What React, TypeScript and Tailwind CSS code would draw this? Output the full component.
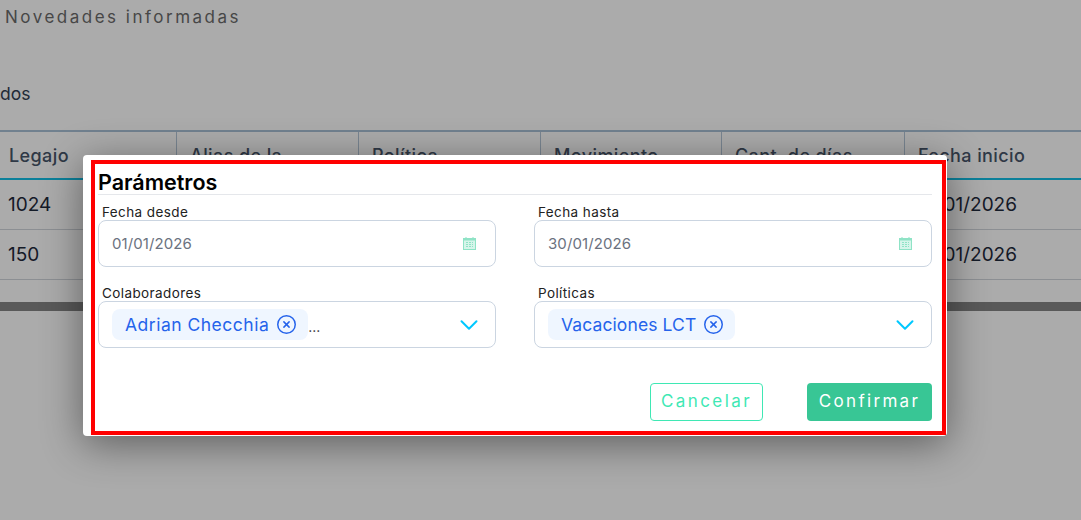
import { ChevronDown, CircleX } from "lucide-react";

const font = { fontFamily: "Inter, 'Liberation Sans', sans-serif" };

const columns = [
  { title: "Legajo", width: "w-[176px]", cell: "pl-[9px]" },
  { title: "Alias de la", width: "w-[182px]", cell: "border-l pl-[13px]" },
  { title: "Política", width: "w-[182px]", cell: "border-l pl-[13px]" },
  { title: "Movimiento", width: "w-[181px]", cell: "border-l pl-[13px]" },
  { title: "Cant. de días", width: "w-[183px]", cell: "border-l pl-[13px]" },
  { title: "Fecha inicio", width: "flex-1", cell: "border-l pl-[13px]" },
];

const rows = [
  { legajo: "1024", inicio: "01/01/2026" },
  { legajo: "150", inicio: "01/01/2026" },
];

function CalendarIcon() {
  return (
    <svg width="13" height="13" viewBox="0 0 13 13" fill="none" className="shrink-0">
      <rect x="0.5" y="1.5" width="12" height="11" fill="#d6f5ea" stroke="#8fe3c6" />
      <rect x="0" y="1" width="13" height="2.5" fill="#8fe3c6" />
      <path d="M3 0v2M10 0v2" stroke="#8fe3c6" />
      <path d="M3 5.5h7M3 7.5h7M3 9.5h7" stroke="#8fe3c6" strokeDasharray="2 1" />
    </svg>
  );
}

function DateField({ label, value }: { label: string; value: string }) {
  return (
    <div className="flex flex-col">
      <label className="pl-1 text-[13.5px] leading-[16px] tracking-[0.4px] text-[#222]">{label}</label>
      <div className="h-[47px] flex items-center justify-between pl-[13px] pr-[19px] rounded-lg border border-[#cbd5e1] bg-white">
        <span className="pt-px text-[15px] tracking-[0.1px] text-[#6b7280]">{value}</span>
        <CalendarIcon />
      </div>
    </div>
  );
}

function SelectField({ label, chip, chipClass, more }: { label: string; chip: string; chipClass: string; more?: boolean }) {
  return (
    <div className="flex flex-col">
      <label className="pl-1 text-[13.5px] leading-[16px] tracking-[0.4px] text-[#222]">{label}</label>
      <div className="h-[47px] flex items-center pl-[13px] pr-[11px] rounded-lg border border-[#cbd5e1] bg-white">
        <span className={`${chipClass} h-[31px] flex items-center gap-[7px] pl-[13px] pr-[11px] rounded-lg bg-[#eff6ff] text-[#2563eb] text-[17.5px]`}>
          <span className="pt-px">{chip}</span>
          <CircleX size={21} strokeWidth={1.7} />
        </span>
        {more && <span className="mt-1 text-[14px] text-[#333]">...</span>}
        <ChevronDown size={30} strokeWidth={1.6} className="ml-auto text-[#00c8ff]" />
      </div>
    </div>
  );
}

export default function App() {
  return (
    <div className="relative h-[520px] w-[1081px] overflow-hidden bg-white" style={font}>
      {/* page behind the dialog */}
      <div className="h-[130px] flex flex-col">
        <p className="pl-[5px] pt-[6px] text-[17px] leading-[22px] tracking-[2.5px] text-[#6b6b6b]">Novedades informadas</p>
        <p className="mt-[55px] text-[17.5px] leading-[22px] text-[#334155]">dos</p>
      </div>
      <div className="border-t-2 border-[#a9c0d6]">
        <div className="flex h-[48px] border-b-2 border-[#12bfe6]">
          {columns.map((c) => (
            <div key={c.title} className={`${c.width} ${c.cell} border-[#b5c7d9] pt-[10px] text-[18px] tracking-[0.4px] font-medium text-[#475569]`}>
              {c.title}
            </div>
          ))}
        </div>
        {rows.map((r) => (
          <div key={r.legajo} className="flex justify-between h-[50px] items-center pt-[2px] pl-[8px] pr-[64px] border-b border-[#d1d5db] text-[19px] text-[#1e293b]">
            <span>{r.legajo}</span>
            <span>{r.inicio}</span>
          </div>
        ))}
        <div className="mt-[22px] h-[9px] bg-[#858585]" />
      </div>

      {/* overlay */}
      <div className="absolute inset-0 bg-black/[.33]" />

      {/* dialog */}
      <div className="absolute left-[83px] top-[155px] w-[864px] h-[281px] flex pl-[8px] pt-[5px] pr-px pb-px rounded-[4px] bg-white shadow-[0_8px_40px_rgba(0,0,0,0.45)]">
        <div className="flex-1 border-4 border-[#ff0000] pl-[3px] pr-[10px] flex flex-col">
          <h2 className="h-[26px] pt-[4px] text-[21.5px] leading-[28px] font-semibold text-black border-b border-[#e5e7eb] box-content">
            Parámetros
          </h2>
          <div className="grid grid-cols-2 gap-x-[38px] gap-y-[18px] pt-[9px]">
            <DateField label="Fecha desde" value="01/01/2026" />
            <DateField label="Fecha hasta" value="30/01/2026" />
            <SelectField label="Colaboradores" chip="Adrian Checchia" chipClass="tracking-[0.5px]" more />
            <SelectField label="Políticas" chip="Vacaciones LCT" chipClass="tracking-[0.1px]" />
          </div>
          <div className="flex justify-end gap-[44px] mt-[35px]">
            <button className="w-[113px] h-[38px] rounded-[4px] border border-[#3fe8b4] bg-white text-[#3fe8b4] text-[17px] tracking-[2.4px]">
              Cancelar
            </button>
            <button className="w-[125px] h-[38px] rounded-[4px] bg-[#38c695] text-white text-[17px] tracking-[2.3px]">
              Confirmar
            </button>
          </div>
        </div>
      </div>
    </div>
  );
}
